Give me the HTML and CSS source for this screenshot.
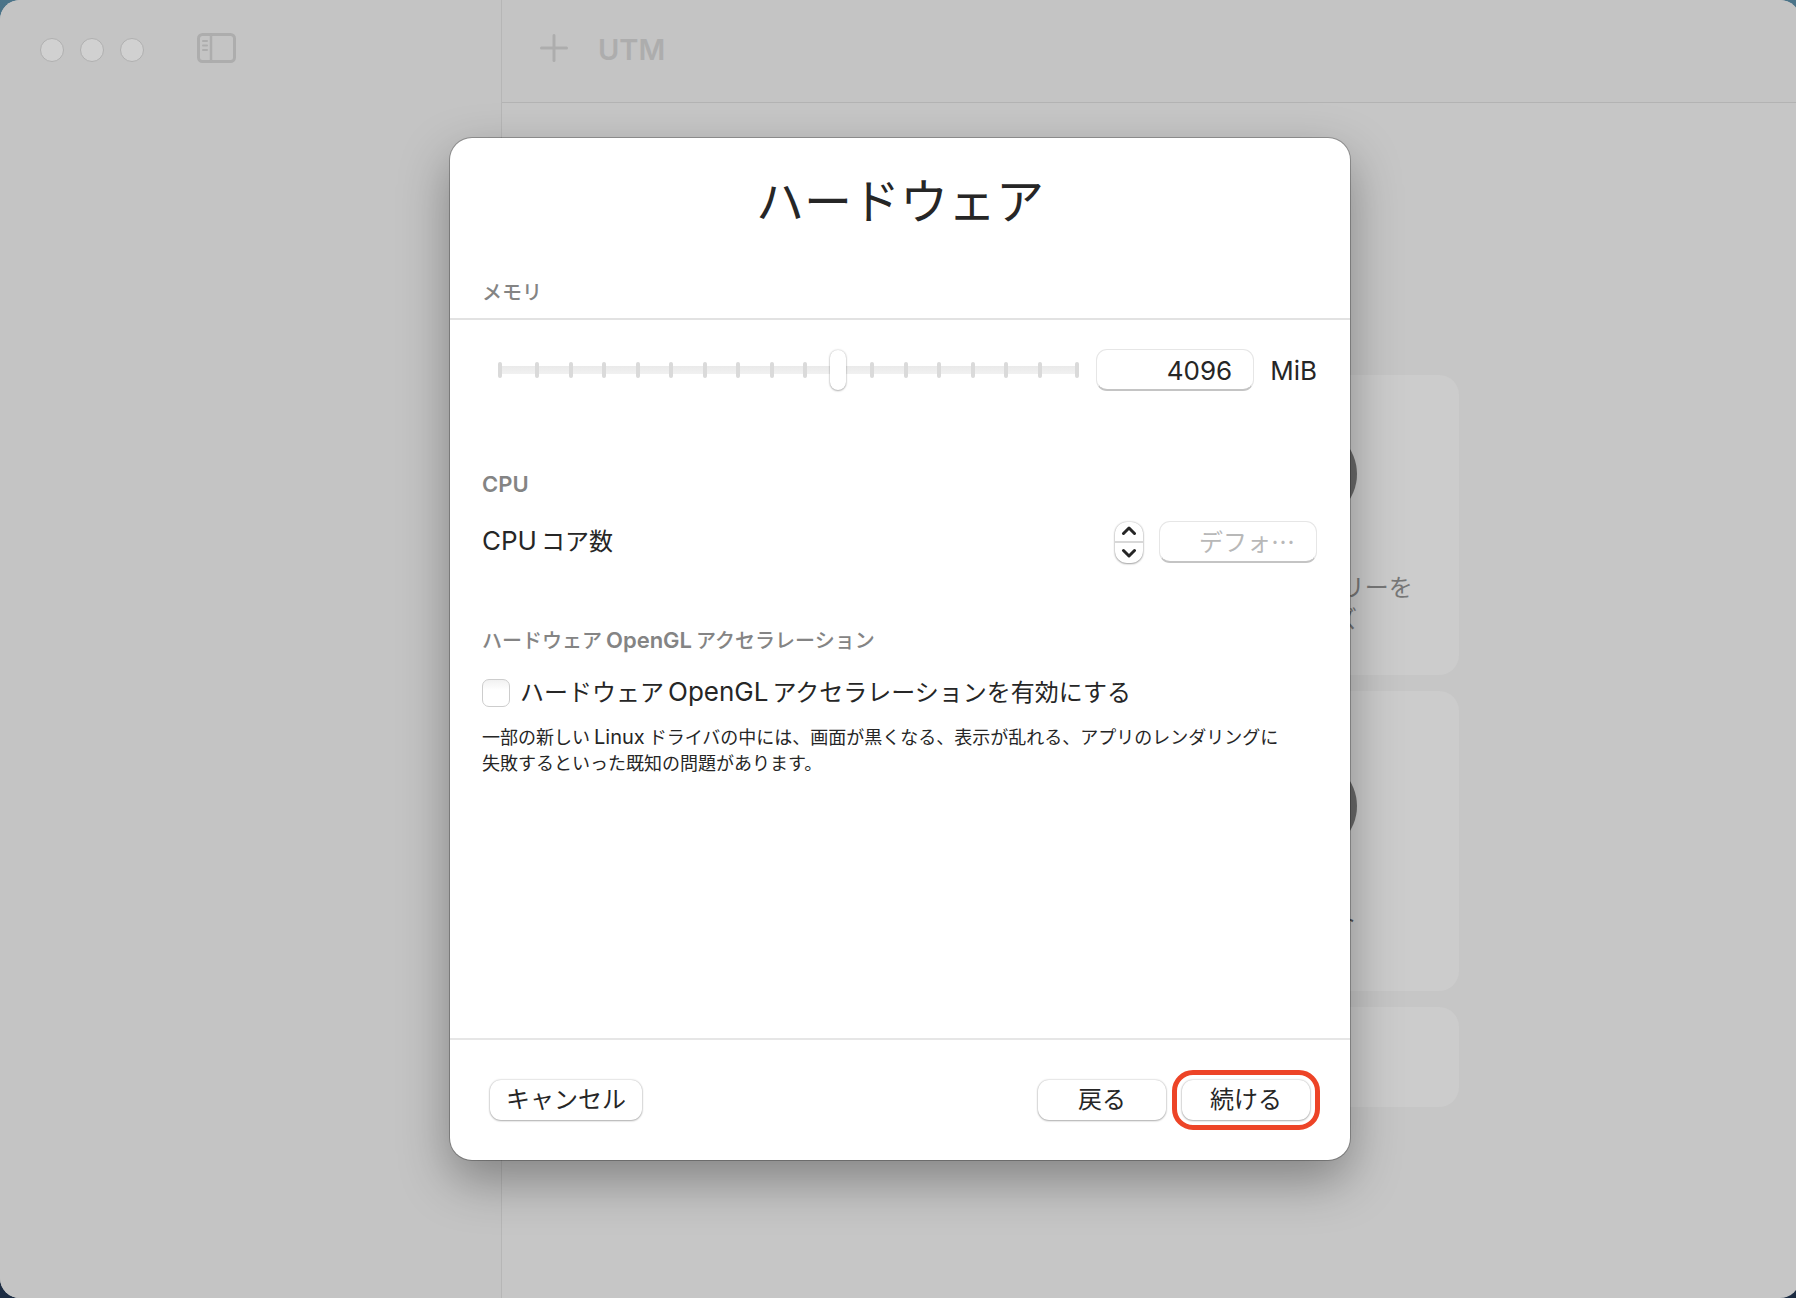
FILE: index.html
```html
<!DOCTYPE html>
<html lang="ja">
<head>
    <meta charset="UTF-8">
    <meta name="viewport" content="width=device-width, initial-scale=1.0">
    <title>UTM</title>
    <link rel="stylesheet" href="styles.css">
</head>
<body>
    <div class="window">
        <aside class="sidebar">
            <div class="lights">
                <span class="light"></span>
                <span class="light"></span>
                <span class="light"></span>
            </div>
            <button class="icon-button" type="button" aria-label="サイドバー" disabled>
                <svg width="40" height="32" viewBox="0 0 40 32" fill="none" stroke="#adadad" stroke-linecap="round">
                    <rect x="1.5" y="2.5" width="36" height="27" rx="4" stroke-width="3"/>
                    <path d="M14 3v26" stroke-width="2.5"/>
                    <path d="M6 9h4M6 13.500h4M6 18h4" stroke-width="2"/>
                </svg>
            </button>
        </aside>

        <main class="content">
            <div class="toolbar">
                <button class="icon-button" type="button" aria-label="新規" disabled>
                    <svg width="28" height="28" viewBox="0 0 28 28" stroke="#adadad" stroke-width="3" stroke-linecap="round">
                        <path d="M14 1.500v25M1.500 14h25"/>
                    </svg>
                </button>
                <h1 class="app-title">UTM</h1>
            </div>
            <div class="cards">
                <div class="card">
                    <span class="card-icon"></span>
                    <p class="card-label"><span class="en">UTM</span>ギャラリーを<br>ブラウズ</p>
                </div>
                <div class="card">
                    <span class="card-icon"></span>
                    <p class="card-label card-label-dark">サポート</p>
                </div>
                <div class="card card-small"></div>
            </div>
        </main>

        <div class="overlay">
            <form class="sheet" role="dialog" aria-labelledby="sheet-title">
                <h2 class="sheet-title" id="sheet-title">ハードウェア</h2>

                <h3 class="section-title section-title-line" id="memory-title">メモリ</h3>
                <div class="sheet-body">
                    <div class="row memory-row">
                        <div class="slider">
                            <div class="ticks">
                                <span></span><span></span><span></span><span></span><span></span><span></span>
                                <span></span><span></span><span></span><span></span><span></span><span></span>
                                <span></span><span></span><span></span><span></span><span></span><span></span>
                            </div>
                            <input class="range" type="range" min="0" max="17" value="10" aria-labelledby="memory-title">
                        </div>
                        <input class="field field-memory" id="memory" type="text" value="4096">
                        <label class="unit" for="memory">MiB</label>
                    </div>

                    <h3 class="section-title"><span class="en">CPU</span></h3>
                    <div class="row cpu-row">
                        <label class="row-label" for="cores"><span class="en">CPU</span>コア数</label>
                        <div class="stepper">
                            <button type="button" aria-label="増やす">
                                <svg width="16" height="10" viewBox="0 0 16 10"><path d="M2.500 7.500L8 2l5.500 5.500"/></svg>
                            </button>
                            <button type="button" aria-label="減らす">
                                <svg width="16" height="10" viewBox="0 0 16 10"><path d="M2.500 2.500L8 8l5.500-5.500"/></svg>
                            </button>
                        </div>
                        <input class="field" id="cores" type="text" placeholder="デフォ…">
                    </div>

                    <h3 class="section-title">ハードウェア<span class="en en-inner">OpenGL</span>アクセラレーション</h3>
                    <label class="check">
                        <input type="checkbox">
                        <span>ハードウェア<span class="en en-inner">OpenGL</span>アクセラレーションを有効にする</span>
                    </label>
                    <p class="note">一部の新しい<span class="en en-inner">Linux</span>ドライバの中には、画面が黒くなる、表示が乱れる、アプリのレンダリングに<br>失敗するといった既知の問題があります。</p>
                </div>

                <div class="sheet-footer">
                    <button class="button" type="button">キャンセル</button>
                    <button class="button button-wide" type="button">戻る</button>
                    <button class="button button-wide button-marked" type="button">続ける</button>
                </div>
            </form>
        </div>
    </div>
</body>
</html>
```

FILE: styles.css
```css
* {
    box-sizing: border-box;
}
body {
    margin: 0;
    overflow: hidden;
    background: linear-gradient(#4b7489, #1c2c42);
    font-family: Inter, "Noto Sans CJK JP", sans-serif;
    font-size: 24px;
    color: #262626;
}
h1, h2, h3, p {
    margin: 0;
}
button, input {
    font: inherit;
    color: inherit;
}

/* main window, runs a little past the right edge */
.window {
    position: relative;
    display: flex;
    min-height: 100vh;
    margin-right: -4px;
    border-radius: 20px;
    overflow: hidden;
    background: #c6c6c6;
}
.sidebar {
    flex: none;
    display: flex;
    align-items: flex-start;
    gap: 53px;
    width: 502px;
    padding: 32px 40px;
    background: #c4c4c4;
    border-right: 1px solid #b6b6b6;
}
.lights {
    display: flex;
    gap: 16px;
    padding-top: 6px;
}
.light {
    width: 24px;
    height: 24px;
    border-radius: 50%;
    background: #d1d1d1;
    border: 1px solid #b0b0b0;
}
.icon-button {
    display: flex;
    padding: 0;
    border: none;
    background: none;
}
.content {
    flex: 1;
}
.toolbar {
    display: flex;
    align-items: center;
    gap: 30px;
    height: 103px;
    padding: 0 38px 6px;
    background: #c4c4c4;
    border-bottom: 1px solid #b3b3b3;
}
.app-title {
    padding-top: 2px;
    font-size: 29px;
    font-weight: 600;
    color: #adadad;
}
.cards {
    display: grid;
    grid-template-columns: 300px 300px;
    justify-content: center;
    gap: 16px;
    padding-top: 272px;
}
.card {
    grid-column: 2;
    display: flex;
    flex-direction: column;
    align-items: center;
    justify-content: center;
    gap: 50px;
    height: 300px;
    padding-top: 11px;
    border-radius: 20px;
    background: #ccc;
}
.card-small {
    height: 100px;
}
.card-icon {
    width: 96px;
    height: 96px;
    border-radius: 50%;
    background: #6a6a6a;
}
.card-label {
    line-height: 32px;
    text-align: center;
    color: #777;
}
.card-label-dark {
    color: #555;
}

/* sheet */
.overlay {
    position: absolute;
    inset: 0;
    display: flex;
    align-items: center;
    justify-content: center;
}
.sheet {
    width: 900px;
    max-width: 100%;
    background: #fff;
    border-radius: 22px;
    box-shadow: 0 0 0 1px rgba(0,0,0,0.25), 0 20px 50px rgba(0,0,0,0.34);
}
.sheet-title {
    padding: 28px 0 41px;
    font-size: 48px;
    font-weight: 400;
    line-height: 72px;
    text-align: center;
}
.section-title {
    font-size: 20px;
    font-weight: 500;
    line-height: 28px;
    color: #848484;
}
.section-title .en {
    font-size: 22px;
    font-weight: 600;
    line-height: 24px;
}
.section-title-line {
    padding: 0 32px 11px;
    border-bottom: 2px solid #e2e2e2;
}
.sheet-body {
    min-height: 718px;
    padding: 29px 33px 29px 32px;
}
.row {
    display: flex;
    align-items: center;
    height: 42px;
}
.memory-row {
    margin-bottom: 80px;
}
.cpu-row {
    gap: 16px;
    margin: 22px 0 64px;
}
.slider {
    flex: 1;
    display: grid;
    align-items: center;
    margin: 0 17px 0 16px;
}
.ticks, .range {
    grid-area: 1 / 1;
}
.ticks {
    display: flex;
    justify-content: space-between;
    background: linear-gradient(#eaeaea, #f1f1f1) center / 100% 8px no-repeat;
}
.ticks span {
    width: 4px;
    height: 16px;
    border-radius: 2px;
    background: #dadada;
}
.ticks span:first-child {
    margin-right: 4px;
}
.ticks span:last-child {
    margin-left: 4px;
}
.range {
    appearance: none;
    width: 100%;
    height: 42px;
    margin: 0;
    background: none;
}
.range::-webkit-slider-thumb {
    appearance: none;
    width: 16px;
    height: 40px;
    border-radius: 8px;
    background: #fff;
    box-shadow: 0 0 2px rgba(0,0,0,0.25), 0 1px 2px rgba(0,0,0,0.25);
}
.field {
    width: 158px;
    height: 42px;
    padding: 2px 21px 0;
    border: 1px solid #e6e6e6;
    border-bottom: 2px solid #c4c4c4;
    border-radius: 11px;
    background: #fff;
    text-align: right;
}
.field-memory, .unit {
    font-size: 26px;
}
.field::placeholder {
    font-family: "Noto Sans CJK JP", sans-serif;
    color: #b8b8b8;
}
.unit {
    margin-left: 16px;
}
.row-label {
    flex: 1;
    line-height: 36px;
}
.en {
    margin-right: 4px;
    font-size: 26px;
    line-height: 28px;
}
.en-inner {
    margin-left: 4px;
}
.stepper {
    display: flex;
    flex-direction: column;
    width: 28px;
    height: 41px;
    border-radius: 12px;
    overflow: hidden;
    background: #fff;
    box-shadow: 0 0 2px rgba(0,0,0,0.3), 0 1px 2px rgba(0,0,0,0.3);
}
.stepper button {
    flex: 1;
    display: flex;
    align-items: center;
    justify-content: center;
    padding: 0;
    border: none;
    background: none;
}
.stepper button:first-child {
    border-bottom: 2px solid #d8d8d8;
}
.stepper path {
    fill: none;
    stroke: #262626;
    stroke-width: 3;
    stroke-linecap: round;
    stroke-linejoin: round;
}
.check {
    display: flex;
    align-items: center;
    gap: 10px;
    margin: 20px 0 14px;
    line-height: 36px;
}
.check input {
    appearance: none;
    width: 28px;
    height: 28px;
    margin: 0;
    border: 1px solid #cdcdcd;
    border-radius: 7px;
    background: linear-gradient(#f1f1f1, #fff 40%);
}
.note {
    font-size: 18px;
    line-height: 26px;
}
.note .en {
    font-size: 20px;
    line-height: 22px;
}
.sheet-footer {
    display: flex;
    gap: 16px;
    padding: 40px;
    border-top: 2px solid #e6e6e6;
}
.button {
    height: 40px;
    padding: 0 16px;
    border: none;
    border-radius: 11px;
    background: #fff;
    line-height: 36px;
    box-shadow: 0 0 2px rgba(0,0,0,0.3), 0 1px 2px rgba(0,0,0,0.25);
}
.button-wide {
    width: 128px;
}
.button:first-child {
    margin-right: auto;
}
.button-marked {
    outline: 5px solid #ed4427;
    outline-offset: 5px;
}
```
